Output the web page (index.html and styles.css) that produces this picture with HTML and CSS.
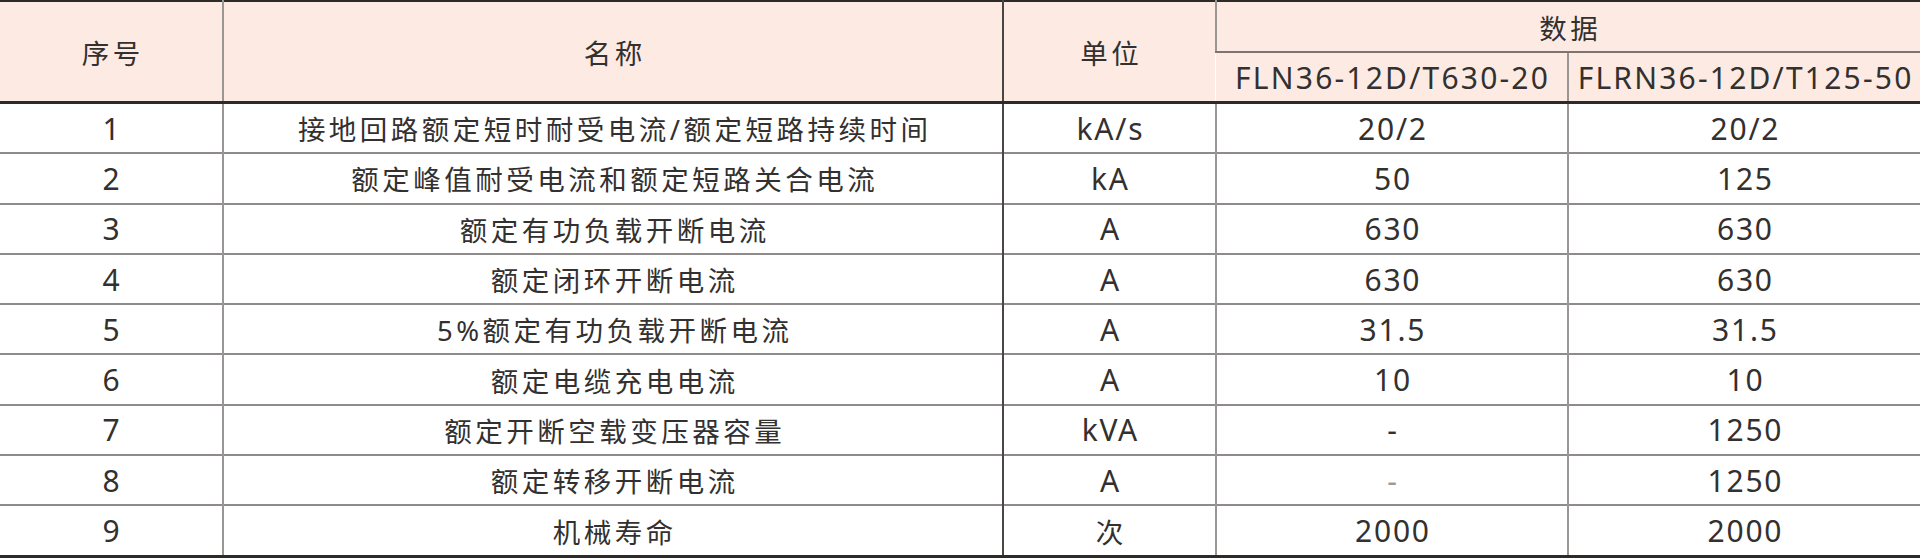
FILE: index.html
```html
<!DOCTYPE html>
<html lang="zh-CN">
<head>
<meta charset="utf-8">
<title>技术参数</title>
<link rel="stylesheet" href="styles.css">
</head>
<body>
<table class="spec">
  <colgroup>
    <col class="c-no">
    <col class="c-name">
    <col class="c-unit">
    <col class="c-d1">
    <col class="c-d2">
  </colgroup>
  <thead>
    <tr class="h1">
      <th rowspan="2" class="zh">序号</th>
      <th rowspan="2" class="zh">名称</th>
      <th rowspan="2" class="zh unit-col">单位</th>
      <th colspan="2" class="zh">数据</th>
    </tr>
    <tr class="h2">
      <th class="en model">FLN36-12D/T630-20</th>
      <th class="en model">FLRN36-12D/T125-50</th>
    </tr>
  </thead>
  <tbody>
    <tr><td class="en">1</td><td class="zh">接地回路额定短时耐受电流/额定短路持续时间</td><td class="en unit-col">kA/s</td><td class="en">20/2</td><td class="en">20/2</td></tr>
    <tr><td class="en">2</td><td class="zh">额定峰值耐受电流和额定短路关合电流</td><td class="en unit-col">kA</td><td class="en">50</td><td class="en">125</td></tr>
    <tr><td class="en">3</td><td class="zh">额定有功负载开断电流</td><td class="en unit-col">A</td><td class="en">630</td><td class="en">630</td></tr>
    <tr><td class="en">4</td><td class="zh">额定闭环开断电流</td><td class="en unit-col">A</td><td class="en">630</td><td class="en">630</td></tr>
    <tr><td class="en">5</td><td class="zh">5%额定有功负载开断电流</td><td class="en unit-col">A</td><td class="en">31.5</td><td class="en">31.5</td></tr>
    <tr><td class="en">6</td><td class="zh">额定电缆充电电流</td><td class="en unit-col">A</td><td class="en">10</td><td class="en">10</td></tr>
    <tr><td class="en">7</td><td class="zh">额定开断空载变压器容量</td><td class="en unit-col">kVA</td><td class="en">-</td><td class="en">1250</td></tr>
    <tr><td class="en">8</td><td class="zh">额定转移开断电流</td><td class="en unit-col">A</td><td class="en faint">-</td><td class="en">1250</td></tr>
    <tr><td class="en">9</td><td class="zh">机械寿命</td><td class="zh unit-col">次</td><td class="en">2000</td><td class="en">2000</td></tr>
  </tbody>
</table>
</body>
</html>
```
FILE: styles.css
```css
html, body {
  margin: 0;
  padding: 0;
  background: #ffffff;
}

.spec {
  width: 1920px;
  border-collapse: collapse;
  table-layout: fixed;
  color: #333030;
  font-family: "Noto Sans", "Noto Sans CJK SC", sans-serif;
  font-weight: 400;
  border-top: 2px solid #2e2a28;
  border-bottom: 3px solid #2e2a28;
}

.c-no { width: 223px; }
.c-name { width: 780px; }
.c-unit { width: 213px; }
.c-d1 { width: 352px; }
.c-d2 { width: 352px; }

.spec th,
.spec td {
  padding: 0;
  text-align: center;
  vertical-align: middle;
  border-left: 2px solid #9a9695;
  white-space: nowrap;
  overflow: hidden;
}

.spec th:first-child,
.spec td:first-child {
  border-left: none;
}

.spec .unit-col {
  border-left-color: #4a4645;
}

.spec thead th {
  background: #fdebe3;
  font-weight: 400;
}

.spec .h1 th {
  height: 49px;
}

.spec .h1 th[colspan] {
  border-bottom: 2px solid #7d7472;
}

.spec .h2 th {
  height: 48px;
  border-bottom: 3px solid #2e2a28;
}

.spec thead .h1 th[rowspan] {
  border-bottom: 3px solid #2e2a28;
}

.spec tbody td {
  height: 48.3px;
  border-top: 2px solid #8e8b8a;
}

.spec tbody tr:first-child td {
  border-top: 3px solid #2e2a28;
}

.zh {
  font-size: 27.5px;
  letter-spacing: 3.5px;
  text-indent: 3.5px;
}

.en {
  font-size: 30px;
  letter-spacing: 1.8px;
  text-indent: 1.8px;
}

.en.model {
  letter-spacing: 2.2px;
  text-indent: 2.2px;
}

.faint {
  color: #9c9999;
}
```
